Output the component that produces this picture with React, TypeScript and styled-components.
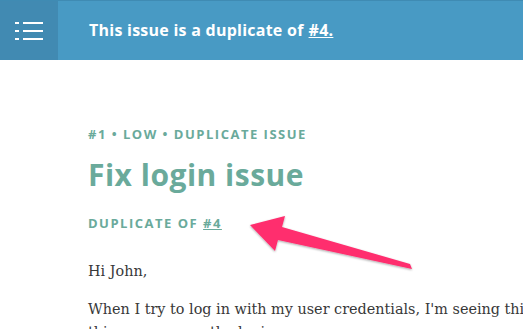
import styled, { createGlobalStyle } from "styled-components";

const GlobalStyle = createGlobalStyle`
  html, body {
    margin: 0;
    padding: 0;
    background: #ffffff;
  }
  body {
    width: 523px;
    height: 329px;
    overflow: hidden;
  }
`;

const Page = styled.div`
  position: relative;
  width: 523px;
  height: 329px;
  overflow: hidden;
  background: #ffffff;
`;

const Header = styled.header`
  display: flex;
  align-items: stretch;
  height: 59px;
  background: #489ac4;
  border-top: 1px solid #3f8bb3;
`;

const MenuButton = styled.div`
  width: 58px;
  display: flex;
  align-items: center;
  justify-content: center;
  background: #418ab2;
`;

const Notice = styled.div`
  display: flex;
  align-items: center;
  padding-left: 31px;
  padding-bottom: 2px;
  font-family: "Open Sans", sans-serif;
  font-weight: 700;
  font-size: 16px;
  letter-spacing: 0.25px;
  color: #ffffff;

  a {
    color: #ffffff;
    text-decoration: underline;
    margin-left: 5px;
  }
`;

const Content = styled.main`
  padding: 65px 0 0 88px;
`;

const Meta = styled.div`
  font-family: "Open Sans", sans-serif;
  font-weight: 700;
  font-size: 13px;
  line-height: 18px;
  letter-spacing: 1.5px;
  color: #6aaa9b;
  text-transform: uppercase;
`;

const Title = styled.h1`
  margin: 14px 0 21px;
  font-family: "Open Sans", sans-serif;
  font-weight: 700;
  font-size: 30px;
  line-height: 36px;
  letter-spacing: 0.5px;
  color: #6aaa9b;
`;

const Duplicate = styled(Meta)`
  a {
    color: #6aaa9b;
    text-decoration: underline;
  }
`;

const Body = styled.div`
  margin-top: 28px;
  font-family: "DejaVu Serif", serif;
  font-size: 14.4px;
  color: #383838;
  white-space: nowrap;

  p {
    margin: 0 0 15px;
    line-height: 23px;
  }
`;

const Annotation = styled.svg`
  position: absolute;
  left: 0;
  top: 0;
  pointer-events: none;
`;

function MenuIcon() {
  return (
    <svg width="28" height="20" viewBox="0 0 28 20">
      <g fill="#ffffff">
        <rect x="0" y="1" width="4" height="2" />
        <rect x="8" y="1" width="20" height="2" />
        <rect x="0" y="9" width="4" height="2" />
        <rect x="8" y="9" width="20" height="2" />
        <rect x="0" y="17" width="4" height="2" />
        <rect x="8" y="17" width="20" height="2" />
      </g>
    </svg>
  );
}

export default function App() {
  return (
    <Page>
      <GlobalStyle />
      <Header>
        <MenuButton>
          <MenuIcon />
        </MenuButton>
        <Notice>
          This issue is a duplicate of <a href="#4">#4.</a>
        </Notice>
      </Header>
      <Content>
        <Meta>#1 • Low • Duplicate issue</Meta>
        <Title>Fix login issue</Title>
        <Duplicate>
          Duplicate of <a href="#4">#4</a>
        </Duplicate>
        <Body>
          <p>Hi John,</p>
          <p>
            When I try to log in with my user credentials, I'm seeing this
            <br />
            this message on the login screen.
          </p>
        </Body>
      </Content>
      <Annotation width="523" height="329" viewBox="0 0 523 329">
        <defs>
          <filter id="shadow" x="-10%" y="-30%" width="120%" height="160%">
            <feDropShadow dx="0" dy="1" stdDeviation="1.2" floodColor="#000" floodOpacity="0.35" />
          </filter>
        </defs>
        <polygon
          filter="url(#shadow)"
          fill="#ff2d6e"
          points="250,225 285,216 282,227 410,264 412,269 278,240 275,251"
        />
      </Annotation>
    </Page>
  );
}
